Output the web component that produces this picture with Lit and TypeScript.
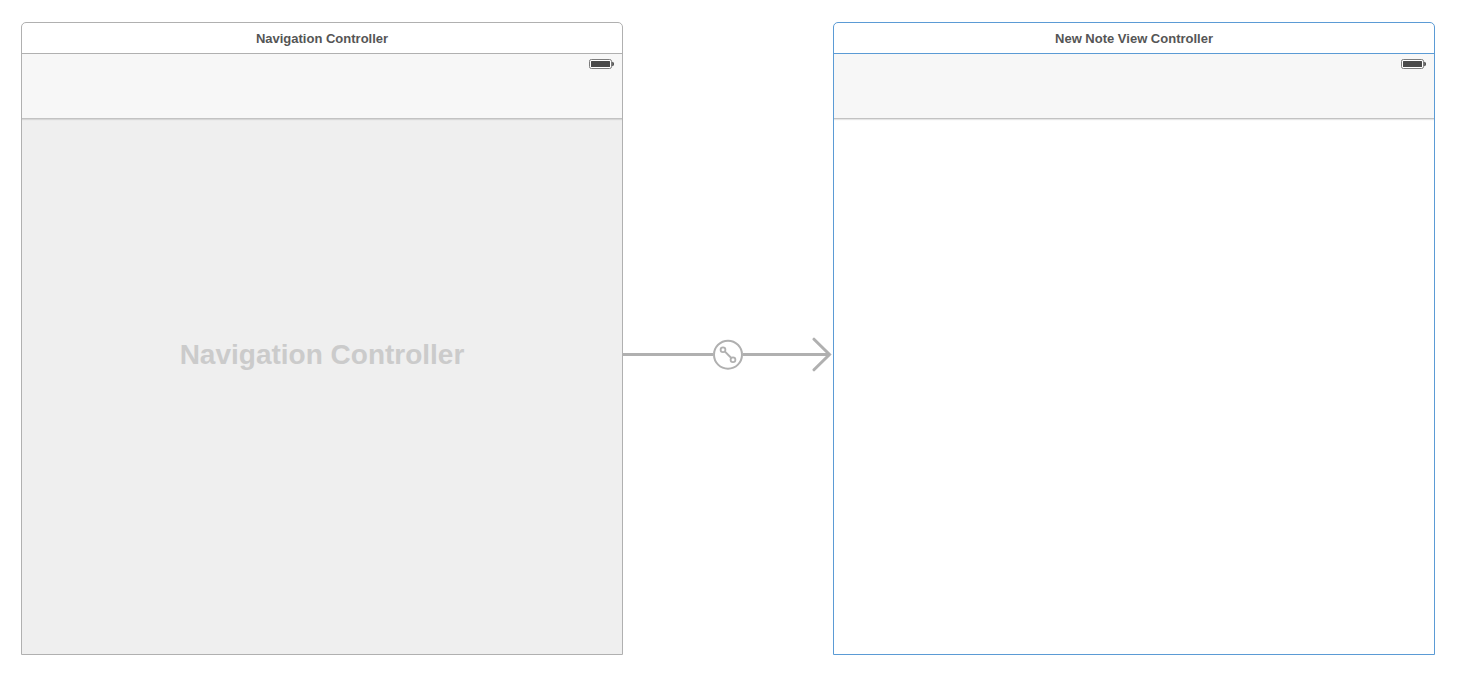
import { LitElement, html, css } from "lit";
import { customElement, property } from "lit/decorators.js";

@customElement("scene-frame")
class SceneFrame extends LitElement {
  @property() heading = "";
  @property() placeholder = "";
  @property({ type: Boolean, reflect: true }) selected = false;

  static styles = css`
    :host {
      --edge: #b0b0b0;
      box-sizing: border-box;
      display: flex;
      flex-direction: column;
      min-width: 0;
      border: 1px solid var(--edge);
      border-radius: 5px 5px 0 0;
      background: #fff;
      overflow: hidden;
    }
    :host([selected]) {
      --edge: #5b9bd5;
    }
    .title {
      margin: 0;
      padding-top: 2px;
      border-bottom: 1px solid var(--edge);
      color: #555;
      font-size: 13px;
      font-weight: 700;
      line-height: 28px;
      text-align: center;
    }
    .screen {
      flex: 1;
      display: grid;
      background: #efefef;
    }
    :host([selected]) .screen {
      background: #fff;
    }
    .bar,
    .placeholder {
      grid-area: 1 / 1;
    }
    .bar {
      align-self: start;
      display: flex;
      justify-content: flex-end;
      align-items: flex-start;
      box-sizing: border-box;
      height: 65px;
      padding: 5px 8px;
      border-bottom: 1px solid #c2c2c2;
      background: #f7f7f7;
      box-shadow: 0 1px 1px rgba(0, 0, 0, 0.1);
    }
    .battery {
      display: block;
    }
    .placeholder {
      place-self: center;
      margin: 0;
      padding-top: 2px;
      color: #cbcbcb;
      font-size: 28px;
      font-weight: 700;
      line-height: 32px;
    }
  `;

  render() {
    return html`
      <h2 class="title">${this.heading}</h2>
      <div class="screen">
        <div class="bar">
          <svg class="battery" width="25" height="10" viewBox="0 0 25 10" aria-hidden="true">
            <rect x="0.5" y="0.5" width="22" height="9" rx="1.8" fill="#fff" stroke="#7b7b7b" />
            <rect x="2" y="2" width="19" height="6" rx="0.5" fill="#4a4a4a" />
            <path d="M23.2 2.8C24.5 3 25 4 25 5S24.5 7 23.2 7.2Z" fill="#4a4a4a" />
          </svg>
        </div>
        ${this.placeholder ? html`<p class="placeholder">${this.placeholder}</p>` : ""}
      </div>
    `;
  }
}

@customElement("segue-arrow")
class SegueArrow extends LitElement {
  static styles = css`
    :host {
      display: grid;
      grid-template-columns: 1fr auto 1fr;
      align-items: center;
      padding-top: 32px;
      color: #b0b0b0;
    }
    .line {
      flex: 1;
      height: 3px;
      background: currentColor;
    }
    .tail {
      display: flex;
      align-items: center;
      padding-right: 1px;
    }
    .badge,
    .head {
      display: block;
      flex: none;
    }
    .head {
      margin-left: -18px;
    }
  `;

  render() {
    return html`
      <span class="line"></span>
      <svg class="badge" width="30" height="31" viewBox="0 0 30 31" fill="none" stroke="currentColor" stroke-width="2" aria-hidden="true">
        <circle cx="15" cy="15.7" r="14" />
        <circle cx="10" cy="10.7" r="2.4" stroke-width="1.8" />
        <circle cx="20" cy="20.7" r="2.4" stroke-width="1.8" />
        <path d="M11.7 12.4L18.3 19" />
      </svg>
      <span class="tail">
        <span class="line"></span>
        <svg class="head" width="20" height="35" viewBox="0 0 20 35" fill="none" stroke="currentColor" stroke-width="3" stroke-linecap="round" aria-hidden="true">
          <path d="M2 2.2L17.5 17.5L2 32.8" />
        </svg>
      </span>
    `;
  }
}

@customElement("app-root")
class AppRoot extends LitElement {
  static styles = css`
    :host {
      display: block;
      background: #fff;
      font-family: "Liberation Sans", Arial, sans-serif;
    }
    .canvas {
      box-sizing: border-box;
      display: grid;
      grid-template-columns: 1fr 210px 1fr;
      min-height: 100vh;
      padding: 22px 27px 27px 21px;
    }
  `;

  render() {
    return html`
      <main class="canvas">
        <scene-frame heading="Navigation Controller" placeholder="Navigation Controller"></scene-frame>
        <segue-arrow></segue-arrow>
        <scene-frame heading="New Note View Controller" selected></scene-frame>
      </main>
    `;
  }
}
